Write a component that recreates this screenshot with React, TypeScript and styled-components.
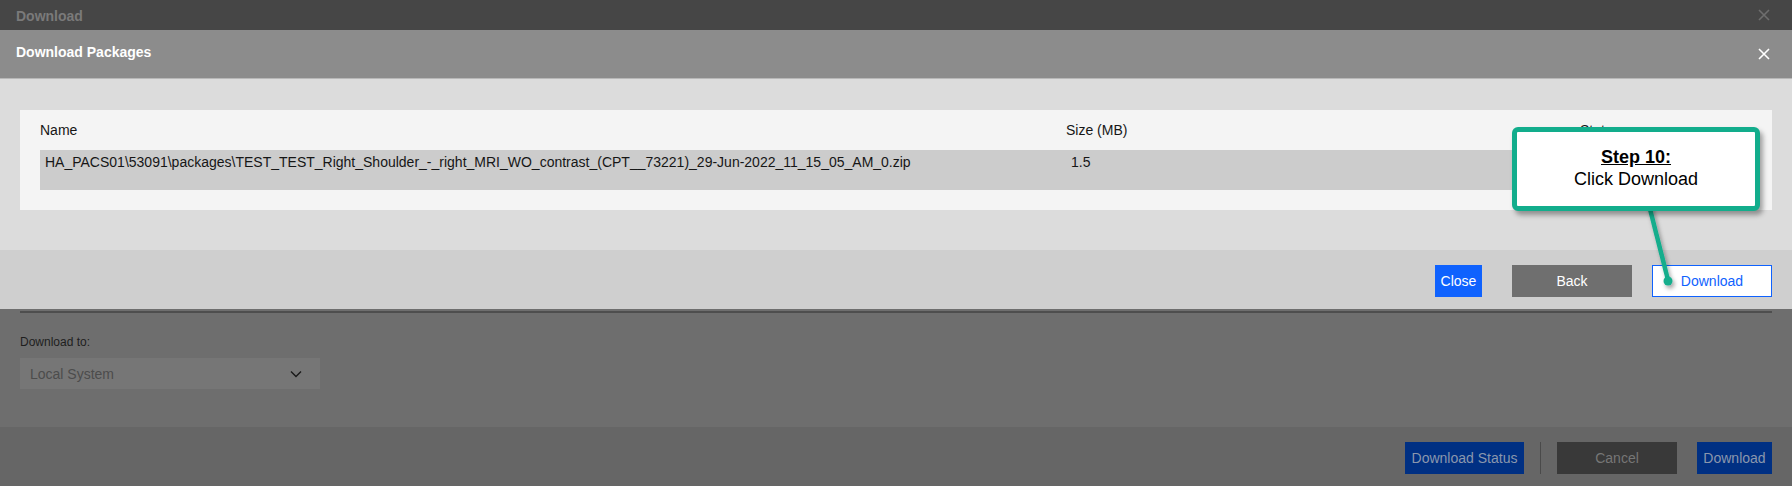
import React from 'react';
import styled, { createGlobalStyle } from 'styled-components';

const GlobalStyle = createGlobalStyle`
  html, body {
    margin: 0;
    padding: 0;
    background: #6e6e6e;
    font-family: "Liberation Sans", Arial, sans-serif;
  }
`;

const Page = styled.div`
  position: relative;
  width: 1792px;
  height: 486px;
  display: flex;
  flex-direction: column;
  overflow: hidden;
  background: #6e6e6e;
`;

const BgHeader = styled.div`
  height: 30px;
  flex: none;
  background: #464646;
  display: flex;
  align-items: center;
  justify-content: space-between;
  padding: 0 22px 0 16px;
  box-sizing: border-box;
`;

const BgTitle = styled.div`
  color: #7a7a7a;
  font-weight: 700;
  font-size: 14px;
  margin-top: 2px;
`;

const BgBody = styled.div`
  flex: 1;
  padding: 281px 20px 0 20px;
  display: flex;
  flex-direction: column;
`;

const Divider = styled.div`
  height: 2px;
  background: #4e4e4e;
`;

const FieldLabel = styled.div`
  margin-top: 22px;
  font-size: 12px;
  color: #1e1e1e;
  line-height: 14px;
`;

const SelectBox = styled.div`
  margin-top: 9px;
  width: 300px;
  height: 31px;
  background: #767676;
  display: flex;
  align-items: center;
  justify-content: space-between;
  padding: 0 18px 0 10px;
  box-sizing: border-box;
  color: #4c4c4c;
  font-size: 14px;
`;

const BgFooter = styled.div`
  height: 59px;
  flex: none;
  box-sizing: border-box;
  background: #666666;
  display: flex;
  align-items: flex-start;
  justify-content: flex-end;
  padding: 15px 20px 0 0;
`;

const DimButton = styled.div<{ $tone: 'blue' | 'dark'; $w: number; $ml: number }>`
  width: ${p => p.$w}px;
  height: 32px;
  margin-left: ${p => p.$ml}px;
  display: flex;
  align-items: center;
  justify-content: center;
  font-size: 14px;
  background: ${p => (p.$tone === 'blue' ? '#003083' : '#393939')};
  color: ${p => (p.$tone === 'blue' ? '#8a97ad' : '#767676')};
`;

const VSep = styled.div`
  width: 1px;
  height: 32px;
  background: #4a4a4a;
  margin-left: 16px;
`;

const Modal = styled.div`
  position: absolute;
  top: 30px;
  left: 0;
  right: 0;
  display: flex;
  flex-direction: column;
`;

const ModalHeader = styled.div`
  height: 49px;
  background: #8c8c8c;
  border-bottom: 1px solid #b8b8b8;
  display: flex;
  align-items: center;
  justify-content: space-between;
  padding: 0 22px 0 16px;
  box-sizing: border-box;
`;

const ModalTitle = styled.div`
  color: #ffffff;
  font-weight: 700;
  font-size: 14px;
  margin-top: -4px;
`;

const ModalBody = styled.div`
  background: #dcdcdc;
  padding: 31px 20px 40px;
`;

const Panel = styled.div`
  background: #f4f4f4;
  padding: 0 20px 20px;
`;

const TableRow = styled.div<{ $head?: boolean }>`
  display: grid;
  grid-template-columns: 1026px 514px 1fr;
  height: 40px;
  background: ${p => (p.$head ? 'transparent' : '#cccccc')};
  align-items: ${p => (p.$head ? 'center' : 'start')};
  color: #161616;
  font-size: 14px;
`;

const Cell = styled.div<{ $head?: boolean }>`
  padding: ${p => (p.$head ? '0' : '4px 5px 0')};
  white-space: nowrap;
  line-height: 16px;
`;

const ModalFooter = styled.div`
  height: 59px;
  box-sizing: border-box;
  background: #cfcfcf;
  display: flex;
  align-items: flex-start;
  justify-content: flex-end;
  padding: 15px 20px 0 0;
`;

const Button = styled.button<{ $variant: 'primary' | 'secondary' | 'outline'; $w: number; $ml: number }>`
  width: ${p => p.$w}px;
  height: 32px;
  margin-left: ${p => p.$ml}px;
  font-family: inherit;
  font-size: 14px;
  padding: 0;
  cursor: pointer;
  box-sizing: border-box;
  background: ${p => (p.$variant === 'primary' ? '#0f62fe' : p.$variant === 'secondary' ? '#6f6f6f' : '#ffffff')};
  color: ${p => (p.$variant === 'outline' ? '#0f62fe' : '#ffffff')};
  border: ${p => (p.$variant === 'outline' ? '1px solid #0f62fe' : 'none')};
`;

const Callout = styled.div`
  position: absolute;
  left: 1512px;
  top: 127px;
  width: 248px;
  height: 84px;
  box-sizing: border-box;
  background: #ffffff;
  border: 5px solid #12ad8c;
  border-radius: 6px;
  box-shadow: 3px 4px 5px rgba(0, 0, 0, 0.35);
  display: flex;
  flex-direction: column;
  align-items: center;
  justify-content: center;
  font-family: "Liberation Sans", Arial, sans-serif;
  font-size: 18px;
  color: #000000;
  line-height: 22px;
  z-index: 2;
`;

const StepLabel = styled.div`
  font-weight: 700;
  text-decoration: underline;
  margin-top: -3px;
`;

const Pointer = styled.svg`
  position: absolute;
  left: 1640px;
  top: 205px;
  z-index: 1;
  overflow: visible;
`;

const CloseIcon = ({ color }: { color: string }) => (
  <svg width="12" height="12" viewBox="0 0 12 12">
    <path d="M1 1 L11 11 M11 1 L1 11" stroke={color} strokeWidth="1.6" />
  </svg>
);

const fileName =
  'HA_PACS01\\53091\\packages\\TEST_TEST_Right_Shoulder_-_right_MRI_WO_contrast_(CPT__73221)_29-Jun-2022_11_15_05_AM_0.zip';

export default function App() {
  return (
    <>
      <GlobalStyle />
      <Page>
        <BgHeader>
          <BgTitle>Download</BgTitle>
          <CloseIcon color="#6e6e6e" />
        </BgHeader>
        <BgBody>
          <Divider />
          <FieldLabel>Download to:</FieldLabel>
          <SelectBox>
            <span>Local System</span>
            <svg width="12" height="8" viewBox="0 0 12 8">
              <path d="M1 1.5 L6 6.5 L11 1.5" stroke="#1a1a1a" strokeWidth="1.4" fill="none" />
            </svg>
          </SelectBox>
        </BgBody>
        <BgFooter>
          <DimButton $tone="blue" $w={119} $ml={0}>Download Status</DimButton>
          <VSep />
          <DimButton $tone="dark" $w={120} $ml={16}>Cancel</DimButton>
          <DimButton $tone="blue" $w={75} $ml={20}>Download</DimButton>
        </BgFooter>

        <Modal>
          <ModalHeader>
            <ModalTitle>Download Packages</ModalTitle>
            <CloseIcon color="#ffffff" />
          </ModalHeader>
          <ModalBody>
            <Panel>
              <TableRow $head>
                <Cell $head>Name</Cell>
                <Cell $head>Size (MB)</Cell>
                <Cell $head>Status</Cell>
              </TableRow>
              <TableRow>
                <Cell>{fileName}</Cell>
                <Cell>1.5</Cell>
                <Cell />
              </TableRow>
            </Panel>
          </ModalBody>
          <ModalFooter>
            <Button $variant="primary" $w={47} $ml={0}>Close</Button>
            <Button $variant="secondary" $w={120} $ml={30}>Back</Button>
            <Button $variant="outline" $w={120} $ml={20}>Download</Button>
          </ModalFooter>
        </Modal>

        <Pointer width="40" height="80">
          <defs>
            <filter id="sh" x="-50%" y="-50%" width="200%" height="200%">
              <feDropShadow dx="2" dy="3" stdDeviation="2" floodColor="#000" floodOpacity="0.35" />
            </filter>
          </defs>
          <g filter="url(#sh)">
            <line x1="9" y1="0" x2="28" y2="75" stroke="#12ad8c" strokeWidth="4.5" />
            <circle cx="28" cy="76" r="4.5" fill="#12ad8c" />
          </g>
        </Pointer>
        <Callout>
          <StepLabel>Step 10:</StepLabel>
          <div>Click Download</div>
        </Callout>
      </Page>
    </>
  );
}
